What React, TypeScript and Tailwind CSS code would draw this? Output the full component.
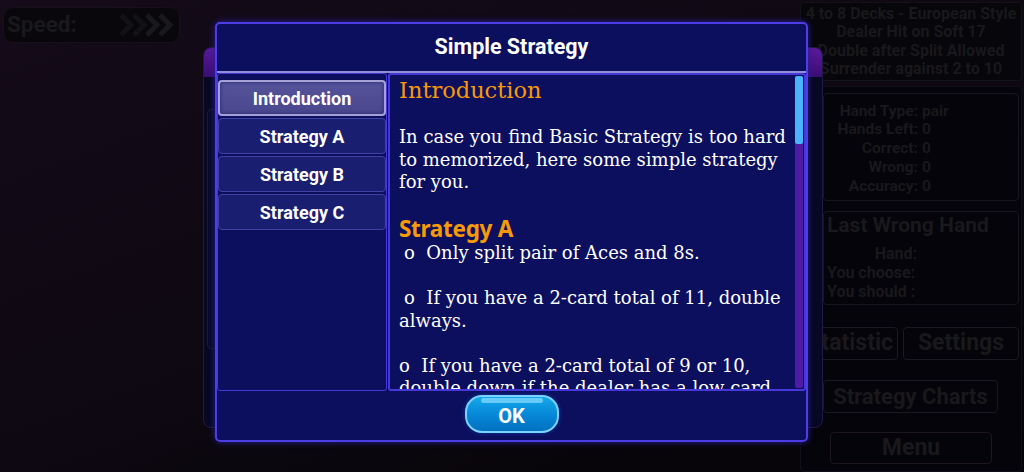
import { useState } from "react";

const menu = ["Introduction", "Strategy A", "Strategy B", "Strategy C"];

const stats = [
  ["Hand Type:", "pair"],
  ["Hands Left:", "0"],
  ["Correct:", "0"],
  ["Wrong:", "0"],
  ["Accuracy:", "0"],
];

const rules = [
  "4 to 8 Decks - European Style",
  "Dealer Hit on Soft 17",
  "Double after Split Allowed",
  "Surrender against 2 to 10",
];

const slab = "font-['DejaVu_Serif',serif]";

const Chevrons = () => (
  <svg width="56" height="24" viewBox="0 0 56 24" fill="none">
    {[0, 13, 26, 39].map((x, i) => (
      <path
        key={x}
        d={`M${x + 2} 2 L${x + 12} 12 L${x + 2} 22`}
        stroke={i < 2 ? "#121114" : "#19181b"}
        strokeWidth="5"
        strokeLinejoin="miter"
      />
    ))}
  </svg>
);

const GameTable = () => (
  <div className="flex h-full w-full">
    <div className="flex-1 pl-[3px] pt-[7px]">
      <div className="flex h-[36px] w-[177px] items-center justify-between rounded-[10px] border border-[#141118] bg-[#09070c] pl-[3px] pr-[4px]">
        <span className="font-['Roboto',sans-serif] text-[22.5px] font-bold text-[#19181b]">Speed:</span>
        <Chevrons />
      </div>
    </div>
    <div className="flex w-[224px] flex-col pr-[2px] pt-[2px] font-['Roboto',sans-serif] font-bold text-[#19181b]">
      <div className="flex h-[79px] flex-col items-center justify-center rounded-[4px] border border-[#131219] bg-[#07060b] text-[16px] leading-[18.5px]">
        {rules.map((r) => (
          <span key={r} className="whitespace-nowrap">{r}</span>
        ))}
      </div>
      <div className="mt-[5px] flex flex-1 flex-col rounded-[4px] border border-[#100e1a] bg-[#05040b] pb-[6px] pl-[22px] pr-[2px] pt-[6px]">
        <div className="flex h-[108px] flex-col justify-center rounded-[4px] border border-[#16151e] pt-[3px] text-[15.5px] leading-[18.8px]">
          {stats.map(([k, v]) => (
            <div key={k} className="flex">
              <span className="w-[94px] text-right">{k}</span>
              <span className="pl-[4px]">{v}</span>
            </div>
          ))}
        </div>
        <div className="mt-[10px] h-[94px] rounded-[4px] border border-[#16151e] pl-[3px]">
          <div className="text-[21px] leading-[26px]">Last Wrong Hand</div>
          <div className="mt-[6px] text-[16px] leading-[19px]">
            <div className="w-[90px] text-right">Hand:</div>
            <div>You choose:</div>
            <div>You should :</div>
          </div>
        </div>
        <div className="-ml-[22px] mt-[22px] flex gap-[5px] text-[23px]">
          <div className="flex h-[33px] w-[97px] items-center justify-end rounded-[4px] border border-[#1a1820] pr-[4px]">
            Statistic
          </div>
          <div className="flex h-[33px] flex-1 items-center justify-center rounded-[4px] border border-[#1a1820]">
            Settings
          </div>
        </div>
        <div className="mt-[20px] flex h-[33px] w-[175px] items-center justify-center rounded-[4px] border border-[#1a1820] text-[22px]">
          Strategy Charts
        </div>
        <div className="ml-[7px] mt-[19px] flex h-[32px] w-[162px] items-center justify-center rounded-[4px] border border-[#1d171b] text-[23px]">
          Menu
        </div>
      </div>
    </div>
  </div>
);

const Content = () => (
  <div className={`${slab} h-full overflow-hidden pl-[9px] pt-[1px] text-[18px] leading-[22.6px] text-white`}>
    <div className="text-[22.5px] leading-[28px] text-[#f79a08]">Introduction</div>
    <div className="mt-[22px] whitespace-nowrap">
      <div>In case you find Basic Strategy is too hard</div>
      <div>to memorized, here some simple strategy</div>
      <div>for you.</div>
    </div>
    <div className="mt-[22px] font-['Noto_Sans',sans-serif] text-[22.5px] font-bold leading-[26px] tracking-[-0.3px] text-[#f79a08]">
      Strategy A
    </div>
    <div className="whitespace-nowrap">
      <div className="pl-[5px]">o&nbsp; Only split pair of Aces and 8s.</div>
      <div>&nbsp;</div>
      <div className="pl-[5px]">o&nbsp; If you have a 2-card total of 11, double</div>
      <div>always.</div>
      <div>&nbsp;</div>
      <div>o&nbsp; If you have a 2-card total of 9 or 10,</div>
      <div>double down if the dealer has a low card</div>
    </div>
  </div>
);

const StrategyDialog = () => {
  const [active, setActive] = useState(0);
  return (
    <div className="flex h-[420px] w-[593px] flex-col rounded-[5px] border-2 border-[#4b3ee6] bg-[#0c0f5e] font-['Roboto',sans-serif] shadow-[0_0_6px_#2a1d9a]">
      <div className="flex h-[49px] items-center justify-center border-b-2 border-[#928ed6] text-[21.5px] font-bold text-white">
        Simple Strategy
      </div>
      <div className="flex h-[318px]">
        <div className="flex w-[170px] flex-col gap-[2px] rounded-[3px] border border-[#4637d8] bg-[#0c0f5e] pt-[6px]">
          {menu.map((m, i) => (
            <button
              key={m}
              onClick={() => setActive(i)}
              className={
                i === active
                  ? "flex h-[36px] items-center justify-center rounded-[4px] border-2 border-[#a5a1d8] bg-[linear-gradient(#55539a,#4a478e)] text-[18px] font-bold text-white shadow-[inset_0_0_4px_#2a2870]"
                  : "flex h-[36px] items-center justify-center rounded-[4px] border border-[#4340a4] bg-[#1a1e70] text-[18px] font-bold text-white"
              }
            >
              {m}
            </button>
          ))}
        </div>
        <div className="relative ml-[1px] flex-1 rounded-[3px] border-2 border-[#4637d8] bg-[#0c0f5e]">
          <Content />
          <div className="absolute bottom-[1px] right-[1px] top-[1px] w-[8px] rounded-[2px] bg-[#4e1aa6]">
            <div className="h-[68px] w-full rounded-[2px] bg-[#4bb2ff]" />
          </div>
        </div>
      </div>
      <div className="flex flex-1 items-center justify-center pb-[3px]">
        <button className="relative flex h-[38px] w-[94px] items-center justify-center rounded-[17px] border-2 border-[#7ed2ff] bg-[linear-gradient(#13a8ea,#0586d6_55%,#0470c2)] text-[20px] font-bold text-white shadow-[0_0_4px_#0a3c9c]">
          <span className="absolute left-[14px] right-[14px] top-[1px] h-[5px] rounded-full bg-[#8fdcff]/70" />
          <span className="relative pt-[3px]">OK</span>
        </button>
      </div>
    </div>
  );
};

export default function App() {
  return (
    <div className="relative h-[472px] w-[1024px] overflow-hidden bg-[linear-gradient(160deg,#150b1a,#0d0811_55%,#040305)]">
      <GameTable />
      {/* window sitting under the dialog */}
      <div className="absolute left-[203px] top-[47px] flex h-[381px] w-[620px] flex-col overflow-hidden rounded-[8px] border border-[#1e1b44] bg-[#070822]">
        <div className="h-[29px] bg-[linear-gradient(#5a1a9a,#3a0d72)]" />
        <div className="ml-[3px] mt-[32px] h-[240px] w-[40px] rounded-[4px] border border-[#1c1a3a] bg-[#090a28]" />
      </div>
      <div className="absolute left-[215px] top-[22px]">
        <StrategyDialog />
      </div>
    </div>
  );
}
